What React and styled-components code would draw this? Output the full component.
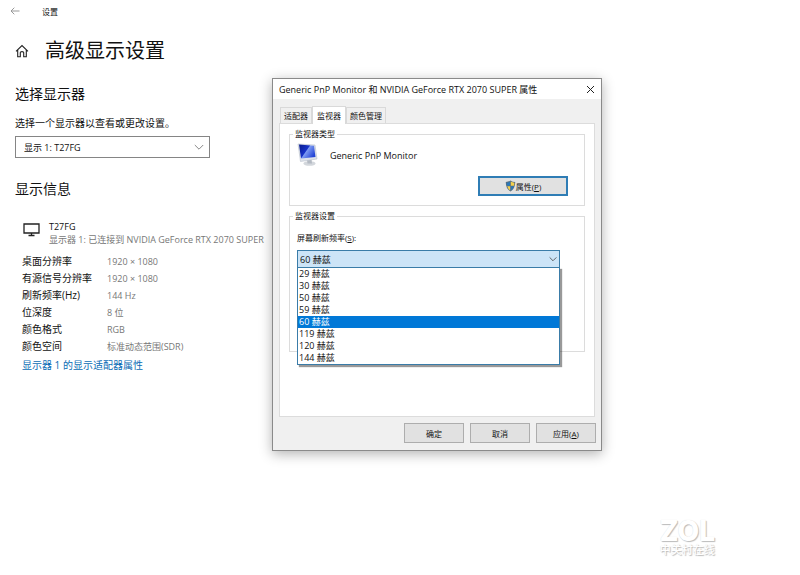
import React, { useState } from 'react'
import styled, { createGlobalStyle } from 'styled-components'

const fonts = '"Open Sans", "Noto Sans CJK SC", sans-serif'

const GlobalStyle = createGlobalStyle`
* {
  box-sizing: border-box;
}

body {
  margin: 0;
  background: #fff;
  color: #111;
  font-family: ${fonts};
  font-size: 10px;
}

button, select {
  font-family: inherit;
  color: inherit;
}
`

const Desktop = styled.div`
position: relative;
min-height: 100vh;
overflow: hidden;
`

const Settings = styled.main`
padding: 0 15px;
`

const TopBar = styled.header`
display: flex;
align-items: center;
gap: 22px;
height: 22px;
margin-left: -5px;
font-size: 8px;
`

const BackButton = styled.button`
display: flex;
padding: 0;
border: 0;
background: none;
color: #999;
`

const PageTitle = styled.div`
display: flex;
align-items: center;
gap: 16px;
margin-top: 15px;

h1 {
  margin: 0;
  font-size: 20px;
  font-weight: 400;
  line-height: 28px;
}
`

const Heading = styled.h2`
margin: ${props => props.$top}px 0 0;
font-size: 14px;
font-weight: 400;
line-height: 20px;
`

const PickerLabel = styled.label`
display: block;
margin: 12px 0 6px;
line-height: 14px;
`

const PickerBox = styled.div`
display: flex;
align-items: center;
width: 195px;
border: 1px solid #858585;

select {
  flex: 1;
  height: 20px;
  padding: 0 8px;
  border: 0;
  outline: 0;
  background: transparent;
  appearance: none;
  font-size: 9px;
}

svg {
  flex: none;
  margin: 0 5px 0 -15px;
  pointer-events: none;
}
`

const Display = styled.div`
display: flex;
gap: 9px;
margin-top: 21px;
padding-left: 8px;
font-size: 9px;
line-height: 13px;
white-space: nowrap;

svg {
  flex: none;
  margin-top: 3px;
}

span {
  display: block;
  color: #777;
}
`

const Facts = styled.dl`
display: grid;
grid-template-columns: 85px 1fr;
margin: 7px 0 3px;
padding-left: 7px;
line-height: 17px;

dd {
  margin: 0;
  color: #777;
  font-size: 9px;
}
`

const AdapterLink = styled.a`
margin-left: 7px;
color: #0a6cb5;
line-height: 14px;
text-decoration: none;
`

const Dialog = styled.section`
position: absolute;
left: 272px;
top: 78px;
width: 330px;
border: 1px solid #8a8a8a;
background: #f0f0f0;
box-shadow: 0 3px 12px rgba(0, 0, 0, 0.3);
font-size: 9px;
`

const TitleBar = styled.div`
display: flex;
align-items: center;
justify-content: space-between;
height: 20px;
padding: 0 6px;
background: #fff;

h2 {
  margin: 0;
  font-size: 9px;
  font-weight: 400;
}

button {
  display: flex;
  padding: 0;
  border: 0;
  background: none;
}
`

const Tabs = styled.div`
display: flex;
align-items: flex-end;
padding: 7px 7px 0;
`

const Tab = styled.button`
position: relative;
height: ${props => props.$active ? 18 : 16}px;
margin-bottom: ${props => props.$active ? -1 : 0}px;
padding: 0 ${props => props.$active ? 4 : 3}px;
border: 1px solid #d9d9d9;
border-bottom: 0;
background: ${props => props.$active ? '#fff' : '#f0f0f0'};
font-size: 8px;
line-height: 12px;
white-space: nowrap;
`

const TabPage = styled.div`
min-height: 294px;
margin: 0 6px;
padding: 4px 9px 0;
border: 1px solid #dcdcdc;
background: #fff;
`

const Group = styled.fieldset`
min-height: ${props => props.$height}px;
margin: 0 0 4px;
padding: 0 7px;
border: 1px solid #dcdcdc;

legend {
  margin-left: -4px;
  padding: 0 2px;
  font-size: 8px;
  line-height: 12px;
}
`

const MonitorRow = styled.div`
display: flex;
align-items: center;
gap: 11px;
height: 30px;
`

const ButtonRow = styled.div`
display: flex;
justify-content: flex-end;
gap: 6px;
padding: ${props => props.$pad};
`

const Button = styled.button`
display: flex;
align-items: center;
justify-content: center;
width: ${props => props.$primary ? 90 : 60}px;
height: 20px;
padding: 0;
border: ${props => props.$primary ? '2px solid #2f7db5' : '1px solid #adadad'};
background: #e1e1e1;
font-size: 8px;
`

const RateLabel = styled.label`
display: block;
margin-top: 9px;
font-size: 8px;
line-height: 14px;
`

const RateBox = styled.div`
position: relative;
display: flex;
align-items: center;
width: 263px;
margin-top: 5px;
border: 1px solid #3a7ca8;
background: #cce4f7;

select {
  flex: 1;
  height: 16px;
  padding: 0 2px;
  border: 0;
  outline: 0;
  background: transparent;
  appearance: none;
  font-size: 9px;
}

svg {
  flex: none;
  margin: 0 2px 0 -10px;
  pointer-events: none;
}
`

const RateList = styled.ul`
position: absolute;
top: 100%;
left: -1px;
right: -1px;
margin: 0;
padding: 0;
border: 1px solid #3a7ca8;
background: #fff;
box-shadow: 2px 2px 1px rgba(0, 0, 0, 0.4);
list-style: none;
`

const Rate = styled.li`
padding: 0 1px;
background: ${props => props.$selected ? '#0078d7' : '#fff'};
color: ${props => props.$selected ? '#fff' : '#111'};
line-height: 12px;
cursor: default;
`

const Watermark = styled.div`
position: absolute;
right: 85px;
bottom: 19px;
color: #fff;
text-align: center;
text-shadow: 1px 1px 1px #bbb, 0 0 1px #ddd;

strong {
  display: block;
  font: 800 28px/26px Inter, sans-serif;
}

span {
  display: block;
  font-size: 11px;
  font-weight: 500;
  line-height: 12px;
}
`

const BackIcon = () => (
  <svg width="10" height="8" viewBox="0 0 10 8" fill="none" stroke="currentColor">
    <path d="M1 4H9.5M4.3 .7L1 4L4.3 7.3" />
  </svg>
)

const HomeIcon = () => (
  <svg width="14" height="14" viewBox="0 0 14 14" fill="none" stroke="#222" strokeWidth="1.1">
    <path d="M1 7.4L7 1.6L13 7.4M2.7 6V12.7H5.3V8.6Q5.3 7.6 7 7.6T8.7 8.6V12.7H11.3V6" />
  </svg>
)

const ScreenIcon = () => (
  <svg width="17" height="14" viewBox="0 0 17 14" fill="none" stroke="#222" strokeWidth="1.3">
    <path d="M1 1H16V10H1ZM8.5 10V12.5M5.5 12.5H11.5" />
  </svg>
)

const ChevronIcon = ({ size, color }) => (
  <svg width={size} height={size} viewBox="0 0 10 10" fill="none" stroke={color}>
    <path d="M.8 3L5 7.2L9.2 3" />
  </svg>
)

const CloseIcon = () => (
  <svg width="9" height="9" viewBox="0 0 9 9" stroke="#222">
    <path d="M1 1L8 8M8 1L1 8" />
  </svg>
)

const MonitorIcon = () => (
  <svg width="22" height="24" viewBox="0 0 22 24">
    <defs>
      <linearGradient id="screen" x1="0" y1="0" x2="1" y2=".6">
        <stop offset="0" stopColor="#0a1c8c" />
        <stop offset=".5" stopColor="#1733c8" />
        <stop offset=".55" stopColor="#7d9bf2" />
        <stop offset="1" stopColor="#2545d6" />
      </linearGradient>
    </defs>
    <ellipse cx="12.5" cy="20.5" rx="6" ry="2.3" fill="#d3d7dc" />
    <path d="M10 17L14.5 16L15 20.5H10.5Z" fill="#b4bac3" />
    <path d="M1 1L18 2L20 16L3.5 18.5Z" fill="#dde2ea" stroke="#b9c0cb" strokeWidth=".6" />
    <path d="M2 1.5L17 2.8L18.5 14L4 15.6Z" fill="url(#screen)" />
  </svg>
)

const ShieldIcon = () => (
  <svg width="11" height="12" viewBox="0 0 11 12">
    <path d="M5.5 .5Q3.5 2 .8 2Q.6 8.5 5.5 11.5Q10.4 8.5 10.2 2Q7.5 2 5.5 .5Z" fill="#5a6f80" />
    <path d="M5.2 1.6Q3.7 2.7 1.7 2.8Q1.6 4.6 2 5.8H5.2Z" fill="#2b78b8" />
    <path d="M5.8 1.6Q7.3 2.7 9.3 2.8Q9.4 4.6 9 5.8H5.8Z" fill="#f5d04b" />
    <path d="M5.2 6.3H2.2Q3 9 5.2 10.4Z" fill="#f5d04b" />
    <path d="M5.8 6.3H8.8Q8 9 5.8 10.4Z" fill="#2b78b8" />
  </svg>
)

const facts = [
  ['桌面分辨率', '1920 × 1080'],
  ['有源信号分辨率', '1920 × 1080'],
  ['刷新频率(Hz)', '144 Hz'],
  ['位深度', '8 位'],
  ['颜色格式', 'RGB'],
  ['颜色空间', '标准动态范围(SDR)'],
]

const tabs = ['适配器', '监视器', '颜色管理']
const rates = [29, 30, 50, 59, 60, 119, 120, 144]

const SettingsPage = () => (
  <Settings>
    <TopBar>
      <BackButton aria-label="返回"><BackIcon /></BackButton>
      <span>设置</span>
    </TopBar>
    <PageTitle>
      <HomeIcon />
      <h1>高级显示设置</h1>
    </PageTitle>

    <Heading $top={19}>选择显示器</Heading>
    <PickerLabel htmlFor="display">选择一个显示器以查看或更改设置。</PickerLabel>
    <PickerBox>
      <select id="display">
        <option>显示 1: T27FG</option>
      </select>
      <ChevronIcon size={10} color="#888" />
    </PickerBox>

    <Heading $top={21}>显示信息</Heading>
    <Display>
      <ScreenIcon />
      <div>
        T27FG
        <span>显示器 1: 已连接到 NVIDIA GeForce RTX 2070 SUPER</span>
      </div>
    </Display>
    <Facts>
      {facts.map(([name, value]) => (
        <React.Fragment key={name}>
          <dt>{name}</dt>
          <dd>{value}</dd>
        </React.Fragment>
      ))}
    </Facts>
    <AdapterLink href="#adapter">显示器 1 的显示适配器属性</AdapterLink>
  </Settings>
)

const PropertiesDialog = () => {
  const [tab, setTab] = useState('监视器')
  const [rate, setRate] = useState(60)

  return (
    <Dialog role="dialog" aria-labelledby="dialog-title">
      <TitleBar>
        <h2 id="dialog-title">Generic PnP Monitor 和 NVIDIA GeForce RTX 2070 SUPER 属性</h2>
        <button aria-label="关闭"><CloseIcon /></button>
      </TitleBar>

      <Tabs role="tablist">
        {tabs.map(name => (
          <Tab
            key={name}
            role="tab"
            aria-selected={name === tab}
            $active={name === tab}
            onClick={() => setTab(name)}
          >
            {name}
          </Tab>
        ))}
      </Tabs>

      <TabPage role="tabpanel">
        <Group $height={78}>
          <legend>监视器类型</legend>
          <MonitorRow>
            <MonitorIcon />
            Generic PnP Monitor
          </MonitorRow>
          <ButtonRow $pad="6px 9px 8px 0">
            <Button $primary><ShieldIcon />属性(<u>P</u>)</Button>
          </ButtonRow>
        </Group>

        <Group $height={142}>
          <legend>监视器设置</legend>
          <RateLabel htmlFor="rate">屏幕刷新频率(<u>S</u>):</RateLabel>
          <RateBox>
            <select id="rate" value={rate} onChange={e => setRate(Number(e.target.value))}>
              {rates.map(hz => <option key={hz} value={hz}>{hz} 赫兹</option>)}
            </select>
            <ChevronIcon size={8} color="#444" />
            <RateList role="listbox" aria-label="屏幕刷新频率">
              {rates.map(hz => (
                <Rate
                  key={hz}
                  role="option"
                  aria-selected={hz === rate}
                  $selected={hz === rate}
                  onClick={() => setRate(hz)}
                >
                  {hz} 赫兹
                </Rate>
              ))}
            </RateList>
          </RateBox>
        </Group>
      </TabPage>

      <ButtonRow $pad="6px 5px 7px">
        <Button>确定</Button>
        <Button>取消</Button>
        <Button>应用(<u>A</u>)</Button>
      </ButtonRow>
    </Dialog>
  )
}

const App = () => (
  <Desktop>
    <GlobalStyle />
    <SettingsPage />
    <PropertiesDialog />
    <Watermark>
      <strong>ZOL</strong>
      <span>中关村在线</span>
    </Watermark>
  </Desktop>
)

export default App
